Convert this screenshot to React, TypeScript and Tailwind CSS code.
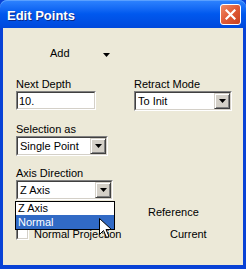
import React from 'react';

const font = { fontFamily: '"Liberation Sans", Arial, sans-serif' };

const Arrow: React.FC = () => (
  <svg width="7" height="4" viewBox="0 0 7 4">
    <path d="M0 0h7L3.5 4z" fill="#000" />
  </svg>
);

const Sunken: React.FC<{ className?: string; children?: React.ReactNode }> = ({ className = '', children }) => (
  <div className={`border-t border-l border-[#808080] border-b border-r border-b-white border-r-white ${className}`}>
    <div className="h-full border-t border-l border-[#404040] border-b border-r border-b-[#d4d0c8] border-r-[#d4d0c8] bg-white">
      {children}
    </div>
  </div>
);

const Combo: React.FC<{ value: string; className?: string }> = ({ value, className = '' }) => (
  <Sunken className={`h-[20px] ${className}`}>
    <div className="flex h-full items-center">
      <span className="flex-1 pl-[2px] text-[11px] leading-none text-black">{value}</span>
      <div className="flex h-[16px] w-[16px] items-center justify-center border border-t-[#d4d0c8] border-l-[#d4d0c8] border-b-[#404040] border-r-[#404040] bg-[#d4d0c8] shadow-[inset_1px_1px_0_#fff,inset_-1px_-1px_0_#808080]">
        <Arrow />
      </div>
    </div>
  </Sunken>
);

const Cursor: React.FC = () => (
  <svg className="absolute left-[99px] top-[218px]" width="14" height="22" viewBox="0 0 14 22">
    <path d="M0.5 0.5v16l4-4 3 7 2.5-1-3-7h5.5z" fill="#fff" stroke="#000" strokeWidth="1" />
  </svg>
);

const App: React.FC = () => {
  return (
    <div className="relative h-[269px] w-[246px] overflow-hidden bg-[#0842d6]" style={font}>
      {/* title bar */}
      <div className="flex h-[28px] items-center justify-between rounded-t-[7px] bg-gradient-to-b from-[#2f84ff] via-[#0058ee] to-[#0049dc] pl-[7px] pr-[5px] shadow-[inset_0_1px_0_#5aa0ff]">
        <span className="mt-[3px] text-[13px] font-bold text-white [text-shadow:1px_1px_0_#0a2a8a]">Edit Points</span>
        <div className="flex h-[21px] w-[21px] items-center justify-center rounded-[3px] border border-white bg-gradient-to-br from-[#f08a66] via-[#e05a35] to-[#c8401e]">
          <svg width="11" height="11" viewBox="0 0 11 11">
            <path d="M1.5 1.5l8 8M9.5 1.5l-8 8" stroke="#fff" strokeWidth="2.2" strokeLinecap="square" />
          </svg>
        </div>
      </div>

      {/* body */}
      <div className="mx-[3px] h-[237px] bg-[#ece9d8] pl-[13px] text-[11px] leading-[13px] text-black">
        <div className="flex items-center pl-[34px] pt-[19px]">
          <span>Add</span>
          <span className="ml-[33px] mt-[2px]"><Arrow /></span>
        </div>

        <div className="mt-[18px] flex">
          <div className="w-[118px]">
            <div>Next Depth</div>
            <Sunken className="h-[19px] w-[80px]">
              <span className="block pl-[1px] pt-[2px]">10.</span>
            </Sunken>
          </div>
          <div>
            <div>Retract Mode</div>
            <Combo value="To Init" className="w-[98px]" />
          </div>
        </div>

        <div className="mt-[12px]">
          <div>Selection as</div>
          <Combo value="Single Point" className="w-[92px]" />
        </div>

        <div className="mt-[11px]">
          <div>Axis Direction</div>
          <Combo value="Z Axis" className="w-[97px]" />
        </div>

        <div className="relative">
          <div className="flex pt-[6px]">
            <div className="w-[132px]" />
            <span>Reference</span>
          </div>
          <div className="mt-[8px] flex items-start">
            <Sunken className="h-[13px] w-[13px]" />
            <span className="ml-[5px] mt-[1px] w-[136px]">Normal Projection</span>
            <span className="mt-[1px]">Current</span>
          </div>
          {/* open dropdown list */}
          <div className="absolute left-[-1px] top-[1px] w-[100px] border border-black bg-white">
            <div className="h-[13px] pl-[2px] leading-[13px]">Z Axis</div>
            <div className="h-[14px] bg-[#316ac5] pl-[2px] leading-[14px] text-white">Normal</div>
          </div>
        </div>
      </div>
      <Cursor />
    </div>
  );
};

export default App;
